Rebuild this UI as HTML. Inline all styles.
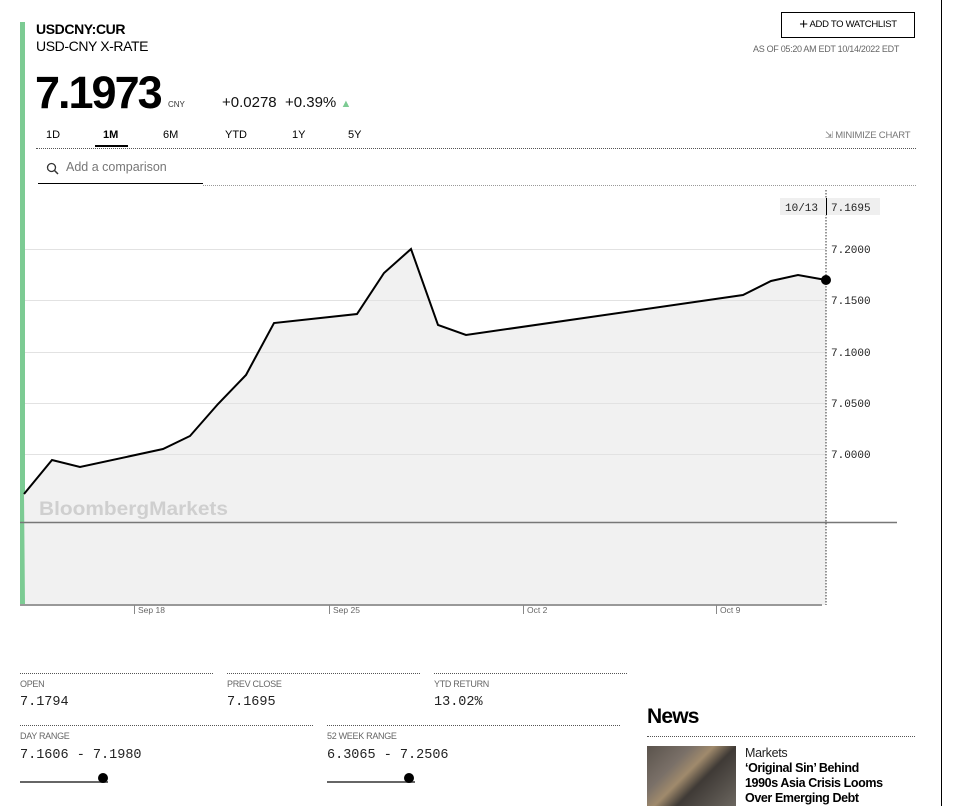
<!DOCTYPE html>
<html><head><meta charset="utf-8"><style>
body{margin:0;width:954px;height:806px;overflow:hidden;background:#fff;font-family:"Liberation Sans",Arial,sans-serif;color:#000;position:relative}
.a{position:absolute;white-space:nowrap}
.mono{font-family:"Liberation Mono",monospace}
.dot{position:absolute;height:0;border-top:1px dotted #555}
.lbl{font-size:9px;color:#666;letter-spacing:-0.3px}
.val{font-family:"Liberation Mono",monospace;font-size:13.5px;color:#222}
</style></head><body>
<div class="a" style="left:941px;top:0;width:1px;height:806px;background:#000"></div>
<div class="a" style="left:20px;top:22px;width:5px;height:583px;background:#7ccb93"></div>
<div class="a" style="left:36px;top:21px;font-size:14px;font-weight:bold;letter-spacing:-0.4px">USDCNY:CUR</div>
<div class="a" style="left:36px;top:38px;font-size:14px;letter-spacing:-0.4px">USD-CNY X-RATE</div>
<div class="a" style="left:35px;top:67px;font-size:45px;font-weight:bold;letter-spacing:-2px;line-height:52px">7.1973</div>
<div class="a" style="left:168px;top:100px;font-size:8px;color:#333">CNY</div>
<div class="a" style="left:222px;top:94px;font-size:15px;color:#111">+0.0278 &nbsp;+0.39% <span style="color:#7ccb93;font-size:11px">▲</span></div>
<div class="a" style="left:781px;top:12px;width:134px;height:26px;border:1px solid #000;box-sizing:border-box;font-size:9.5px;line-height:24px;text-align:center;letter-spacing:-0.3px"><span style="font-size:15px;vertical-align:-2px">+</span> ADD TO WATCHLIST</div>
<div class="a" style="left:753px;top:44px;font-size:9px;color:#666;letter-spacing:-0.3px">AS OF 05:20 AM EDT 10/14/2022 EDT</div>
<div class="a" style="top:129px;font-size:11px;left:46px">1D</div>
<div class="a" style="top:129px;font-size:11px;left:103px;font-weight:bold">1M</div>
<div class="a" style="top:129px;font-size:11px;left:163px">6M</div>
<div class="a" style="top:129px;font-size:11px;left:225px">YTD</div>
<div class="a" style="top:129px;font-size:11px;left:292px">1Y</div>
<div class="a" style="top:129px;font-size:11px;left:348px">5Y</div>
<div class="a" style="left:95px;top:145px;width:33px;height:2px;background:#000"></div>
<div class="dot" style="left:36px;top:148px;width:880px"></div>
<div class="a" style="left:825px;top:130px;font-size:9.5px;color:#777;letter-spacing:-0.2px">⇲ MINIMIZE CHART</div>
<svg class="a" style="left:46px;top:162px" width="14" height="14" viewBox="0 0 14 14"><circle cx="5.5" cy="5.5" r="4" fill="none" stroke="#333" stroke-width="1.3"/><path d="M8.5 8.5L12 12" stroke="#333" stroke-width="1.5"/></svg>
<div class="a" style="left:66px;top:160px;font-size:12.5px;color:#777">Add a comparison</div>
<div class="a" style="left:38px;top:183px;width:165px;height:1px;background:#000"></div>
<div class="dot" style="left:203px;top:185px;width:713px;border-top-color:#999"></div>
<svg class="a" style="left:0;top:0" width="954" height="640">
<polygon fill="#f1f1f1" points="24,494 52,460 80,467 163,449 190,436 218,404 246,375 274,323 357,314 384,273 411,249 438,325 466,335 743,295 771,281 798,275 826,280 826,605 25,605"/>
<g stroke="#e2e2e2"><line x1="25" y1="249.5" x2="826" y2="249.5"/><line x1="25" y1="454.5" x2="826" y2="454.5"/><line x1="25" y1="403.5" x2="826" y2="403.5"/><line x1="25" y1="352.5" x2="826" y2="352.5"/><line x1="25" y1="300.5" x2="826" y2="300.5"/></g>
<text x="39" y="515" font-family="Liberation Sans" font-weight="bold" font-size="19" fill="#cfcfcf" textLength="189" lengthAdjust="spacingAndGlyphs">BloombergMarkets</text>
<line x1="20" y1="522.5" x2="897" y2="522.5" stroke="#777" stroke-width="1.5"/>
<line x1="20" y1="605" x2="822" y2="605" stroke="#999" stroke-width="2"/>
<polyline fill="none" stroke="#000" stroke-width="2" points="24,494 52,460 80,467 163,449 190,436 218,404 246,375 274,323 357,314 384,273 411,249 438,325 466,335 743,295 771,281 798,275 826,280"/>
<line x1="826" y1="190" x2="826" y2="605" stroke="#333" stroke-dasharray="1.5,1.5"/>
<circle cx="826" cy="280" r="5" fill="#000"/>
<rect x="780" y="198" width="100" height="17" fill="#efefef"/>
<line x1="826.5" y1="198" x2="826.5" y2="215" stroke="#000"/>
<g font-family="Liberation Mono" font-size="11" fill="#222">
<text x="785" y="211">10/13</text><text x="831" y="211">7.1695</text>
<text x="831" y="253">7.2000</text><text x="831" y="304">7.1500</text><text x="831" y="356">7.1000</text><text x="831" y="407">7.0500</text><text x="831" y="458">7.0000</text></g>
<g font-family="Liberation Sans" font-size="8.5" fill="#666">
<text x="138" y="613">Sep 18</text><text x="333" y="613">Sep 25</text><text x="527" y="613">Oct 2</text><text x="720" y="613">Oct 9</text></g>
<g stroke="#888"><line x1="134.5" y1="605" x2="134.5" y2="614"/><line x1="329.5" y1="605" x2="329.5" y2="614"/><line x1="523.5" y1="605" x2="523.5" y2="614"/><line x1="716.5" y1="605" x2="716.5" y2="614"/></g>
</svg>
<div class="dot" style="left:20px;top:673px;width:193px"></div>
<div class="dot" style="left:227px;top:673px;width:193px"></div>
<div class="dot" style="left:434px;top:673px;width:193px"></div>
<div class="a lbl" style="left:20px;top:679px">OPEN</div>
<div class="a lbl" style="left:227px;top:679px">PREV CLOSE</div>
<div class="a lbl" style="left:434px;top:679px">YTD RETURN</div>
<div class="a val" style="left:20px;top:695px">7.1794</div>
<div class="a val" style="left:227px;top:695px">7.1695</div>
<div class="a val" style="left:434px;top:695px">13.02%</div>
<div class="dot" style="left:20px;top:725px;width:293px"></div>
<div class="dot" style="left:327px;top:725px;width:293px"></div>
<div class="a lbl" style="left:20px;top:731px">DAY RANGE</div>
<div class="a lbl" style="left:327px;top:731px">52 WEEK RANGE</div>
<div class="a val" style="left:20px;top:748px">7.1606 - 7.1980</div>
<div class="a val" style="left:327px;top:748px">6.3065 - 7.2506</div>
<div class="a" style="left:20px;top:781px;width:88px;height:2px;background:#666"></div>
<div class="a" style="left:98px;top:773px;width:10px;height:10px;border-radius:50%;background:#000"></div>
<div class="a" style="left:327px;top:781px;width:88px;height:2px;background:#666"></div>
<div class="a" style="left:404px;top:773px;width:10px;height:10px;border-radius:50%;background:#000"></div>
<div class="a" style="left:647px;top:705px;font-size:21px;font-weight:bold;letter-spacing:-0.8px">News</div>
<div class="dot" style="left:647px;top:736px;width:268px"></div>
<div class="a" style="left:647px;top:746px;width:89px;height:60px;background:linear-gradient(135deg,#5a534c 0%,#7a7068 30%,#a08a6c 45%,#3f3a36 60%,#6b665f 100%)"></div>
<div class="a" style="left:745px;top:746px;font-size:12.5px;color:#222;letter-spacing:-0.3px">Markets</div>
<div class="a" style="left:745px;top:761px;font-size:12.5px;font-weight:bold;line-height:15px;letter-spacing:-0.4px">‘Original Sin’ Behind<br>1990s Asia Crisis Looms<br>Over Emerging Debt</div>
</body></html>
